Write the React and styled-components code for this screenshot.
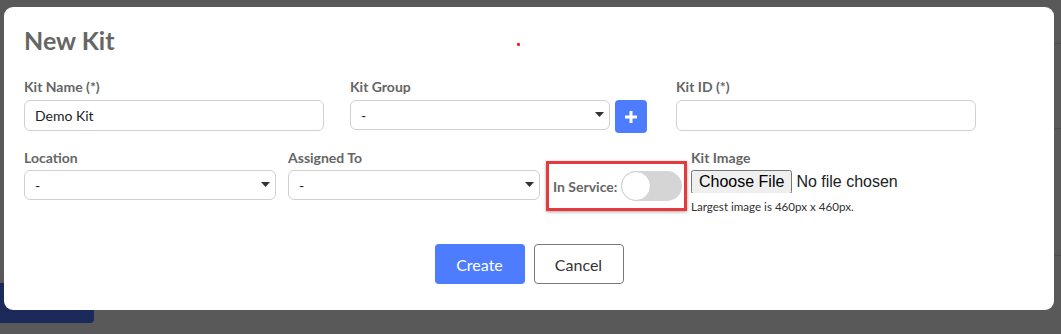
import React from "react";
import styled, { createGlobalStyle } from "styled-components";

const Global = createGlobalStyle`
  html, body { margin: 0; padding: 0; }
  body {
    background: #595959;
    font-family: Lato, "Open Sans", Arial, sans-serif;
    width: 1061px;
    height: 334px;
    overflow: hidden;
    position: relative;
  }
  * { box-sizing: border-box; }
`;

const Backdrop = styled.div`
  position: relative;
  width: 1061px;
  height: 334px;
  padding: 7px 0 0 4px;
`;

const PageButton = styled.div`
  position: absolute;
  left: 0;
  top: 283px;
  width: 94px;
  height: 40px;
  background: #1b2a5a;
  border-radius: 0 0 4px 0;
`;

const EdgeLine = styled.div`
  position: absolute;
  right: 0;
  width: 6px;
  height: 1px;
  top: ${(p) => p.$top}px;
  background: #4c4c4c;
`;

const Modal = styled.div`
  position: relative;
  width: 1050px;
  height: 303px;
  background: #fff;
  border-radius: 9px;
  padding: 18px 20px 0 20px;
`;

const Title = styled.h2`
  margin: 0;
  font-family: Lato, sans-serif;
  font-weight: 700;
  font-size: 25px;
  line-height: 30px;
  color: #666;
`;

const Dot = styled.span`
  position: absolute;
  left: 513px;
  top: 36px;
  width: 3px;
  height: 3px;
  border-radius: 1px;
  background: #ff1a1a;
`;

const Row = styled.div`
  display: flex;
  align-items: flex-start;
  margin-top: ${(p) => p.$mt}px;
`;

const Field = styled.div`
  display: flex;
  flex-direction: column;
  width: ${(p) => p.$w}px;
  margin-right: ${(p) => p.$mr || 0}px;
`;

const Label = styled.label`
  font-family: Lato, sans-serif;
  font-weight: 700;
  font-size: 14px;
  line-height: 18px;
  color: #666;
  margin-bottom: ${(p) => p.$mb ?? 4}px;
`;

const TextInput = styled.input`
  width: 100%;
  height: 31px;
  border: 1px solid #d0d0d0;
  border-radius: 6px;
  padding: 0 10px;
  font-family: Lato, sans-serif;
  font-size: 14px;
  color: #222;
  background: #fff;
  outline: none;
`;

const SelectWrap = styled.div`
  position: relative;
  width: ${(p) => (p.$w ? `${p.$w}px` : "100%")};
  height: 30px;
`;

const Select = styled.select`
  appearance: none;
  -webkit-appearance: none;
  width: 100%;
  height: 100%;
  border: 1px solid #d0d0d0;
  border-radius: 6px;
  padding: 0 10px;
  font-family: Lato, sans-serif;
  font-size: 14px;
  color: #222;
  background: #fff;
  outline: none;
`;

const Caret = styled.svg`
  position: absolute;
  right: 6px;
  top: 12px;
  width: 9px;
  height: 5px;
  pointer-events: none;
`;

const GroupLine = styled.div`
  display: flex;
  align-items: flex-start;
  gap: 5px;
`;

const AddButton = styled.button`
  width: 32px;
  height: 33px;
  border: none;
  border-radius: 4px;
  background: #4d7cfe;
  display: flex;
  align-items: center;
  justify-content: center;
  padding: 0;
`;

const ServiceBox = styled.div`
  display: flex;
  align-items: center;
  gap: 4px;
  flex-shrink: 0;
  margin-top: 12px;
  margin-right: 4px;
  width: 141px;
  height: 50px;
  padding: 0 1px 0 4px;
  border: 3px solid #e5393b;
  box-shadow: 0 1px 3px rgba(0, 0, 0, 0.35);
`;

const ServiceLabel = styled.span`
  font-family: Lato, sans-serif;
  font-weight: 700;
  font-size: 14px;
  color: #666;
  white-space: nowrap;
  flex-shrink: 0;
`;

const Track = styled.div`
  position: relative;
  flex-shrink: 0;
  width: 61px;
  height: 30px;
  border-radius: 15px;
  background: #d5d5d5;
`;

const Knob = styled.div`
  position: absolute;
  left: 0;
  top: 0;
  width: 30px;
  height: 30px;
  border-radius: 50%;
  background: #fff;
  border: 1px solid #cfcfcf;
`;

const FileInput = styled.input`
  font-family: "Liberation Sans", Arial, sans-serif;
  font-size: 16px;
  color: #222;
  margin: 0;
  height: 23px;
`;

const Hint = styled.div`
  font-family: Lato, sans-serif;
  font-size: 11.6px;
  color: #333;
  margin-top: 7px;
`;

const Actions = styled.div`
  display: flex;
  justify-content: center;
  gap: 9px;
  margin-top: 31px;
`;

const Button = styled.button`
  width: 90px;
  height: 40px;
  border-radius: 4px;
  font-family: Lato, sans-serif;
  font-size: 16px;
  cursor: pointer;
  background: ${(p) => (p.$primary ? "#4d7cfe" : "#fff")};
  color: ${(p) => (p.$primary ? "#fff" : "#333")};
  border: ${(p) => (p.$primary ? "none" : "1px solid #777")};
`;

const CaretIcon = () => (
  <Caret viewBox="0 0 9 5">
    <path d="M0 0 L9 0 L4.5 5 Z" fill="#333" />
  </Caret>
);

const Dropdown = ({ w }) => (
  <SelectWrap $w={w}>
    <Select defaultValue="-">
      <option value="-">-</option>
    </Select>
    <CaretIcon />
  </SelectWrap>
);

export default function App() {
  return (
    <>
      <Global />
      <Backdrop>
        <PageButton />
        <EdgeLine $top={43} />
        <EdgeLine $top={128} />
        <EdgeLine $top={255} />
        <Modal>
          <Dot />
          <Title>New Kit</Title>
          <Row $mt={23}>
            <Field $w={300} $mr={26}>
              <Label>Kit Name (*)</Label>
              <TextInput defaultValue="Demo Kit" />
            </Field>
            <Field $w={300} $mr={26}>
              <Label>Kit Group</Label>
              <GroupLine>
                <Dropdown w={260} />
                <AddButton aria-label="Add group">
                  <svg width="14" height="14" viewBox="0 0 14 14">
                    <path d="M7 1 V13 M1 7 H13" stroke="#fff" strokeWidth="3" />
                  </svg>
                </AddButton>
              </GroupLine>
            </Field>
            <Field $w={300}>
              <Label>Kit ID (*)</Label>
              <TextInput />
            </Field>
          </Row>
          <Row $mt={16}>
            <Field $w={252} $mr={12}>
              <Label $mb={3}>Location</Label>
              <Dropdown />
            </Field>
            <Field $w={252} $mr={6}>
              <Label $mb={3}>Assigned To</Label>
              <Dropdown />
            </Field>
            <ServiceBox>
              <ServiceLabel>In Service:</ServiceLabel>
              <Track>
                <Knob />
              </Track>
            </ServiceBox>
            <Field $w={300}>
              <Label $mb={3}>Kit Image</Label>
              <FileInput type="file" />
              <Hint>Largest image is 460px x 460px.</Hint>
            </Field>
          </Row>
          <Actions>
            <Button $primary>Create</Button>
            <Button>Cancel</Button>
          </Actions>
        </Modal>
      </Backdrop>
    </>
  );
}
